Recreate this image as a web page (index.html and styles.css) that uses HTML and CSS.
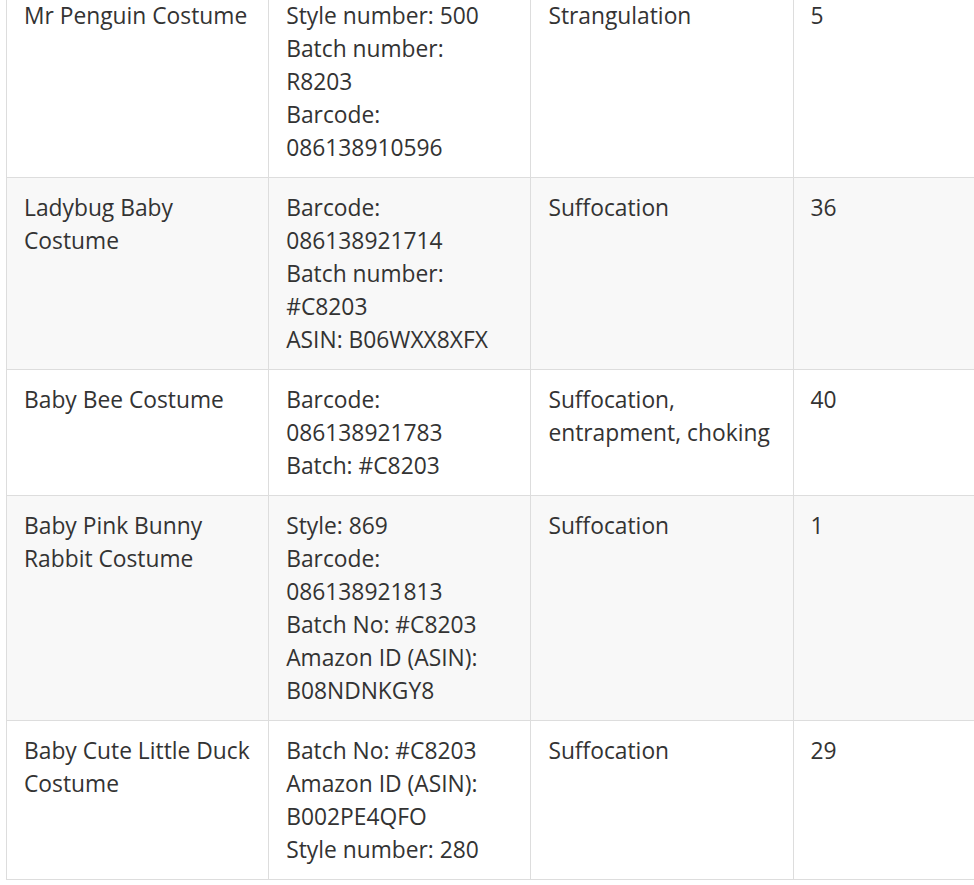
FILE: index.html
```html
<!DOCTYPE html>
<html>
<head>
<meta charset="utf-8">
<link rel="stylesheet" href="styles.css">
</head>
<body>
<div class="wrap">
<table class="recalls">
<tbody>
<tr>
<td>Mr Penguin Costume</td>
<td>Style number: 500<br>Batch number: R8203<br>Barcode: 086138910596</td>
<td>Strangulation</td>
<td>5</td>
</tr>
<tr class="alt">
<td>Ladybug Baby Costume</td>
<td>Barcode: 086138921714<br>Batch number: #C8203<br>ASIN: B06WXX8XFX</td>
<td>Suffocation</td>
<td>36</td>
</tr>
<tr>
<td>Baby Bee Costume</td>
<td>Barcode: 086138921783<br>Batch: #C8203</td>
<td>Suffocation, entrapment, choking</td>
<td>40</td>
</tr>
<tr class="alt">
<td>Baby Pink Bunny Rabbit Costume</td>
<td>Style: 869<br>Barcode: 086138921813<br>Batch No: #C8203<br>Amazon ID (ASIN): B08NDNKGY8</td>
<td>Suffocation</td>
<td>1</td>
</tr>
<tr>
<td>Baby Cute Little Duck Costume</td>
<td>Batch No: #C8203<br>Amazon ID (ASIN): B002PE4QFO<br>Style number: 280</td>
<td>Suffocation</td>
<td>29</td>
</tr>
</tbody>
</table>
</div>
</body>
</html>
```
FILE: styles.css
```css
html, body {
  margin: 0;
  padding: 0;
  overflow: hidden;
  background: #fff;
}
.wrap {
  margin-top: -15px;
  padding-left: 6px;
  width: 1100px;
}
.recalls {
  border-collapse: collapse;
  table-layout: fixed;
  width: 1049px;
  font-family: "Open Sans", sans-serif;
  font-size: 22.8px;
  line-height: 33px;
  color: #333;
}
.recalls td {
  width: 227.2px;
  border: 1px solid #ddd;
  padding: 13px 17px;
  vertical-align: top;
  text-align: left;
}
.recalls tr.alt td {
  background: #f8f8f8;
}
```
